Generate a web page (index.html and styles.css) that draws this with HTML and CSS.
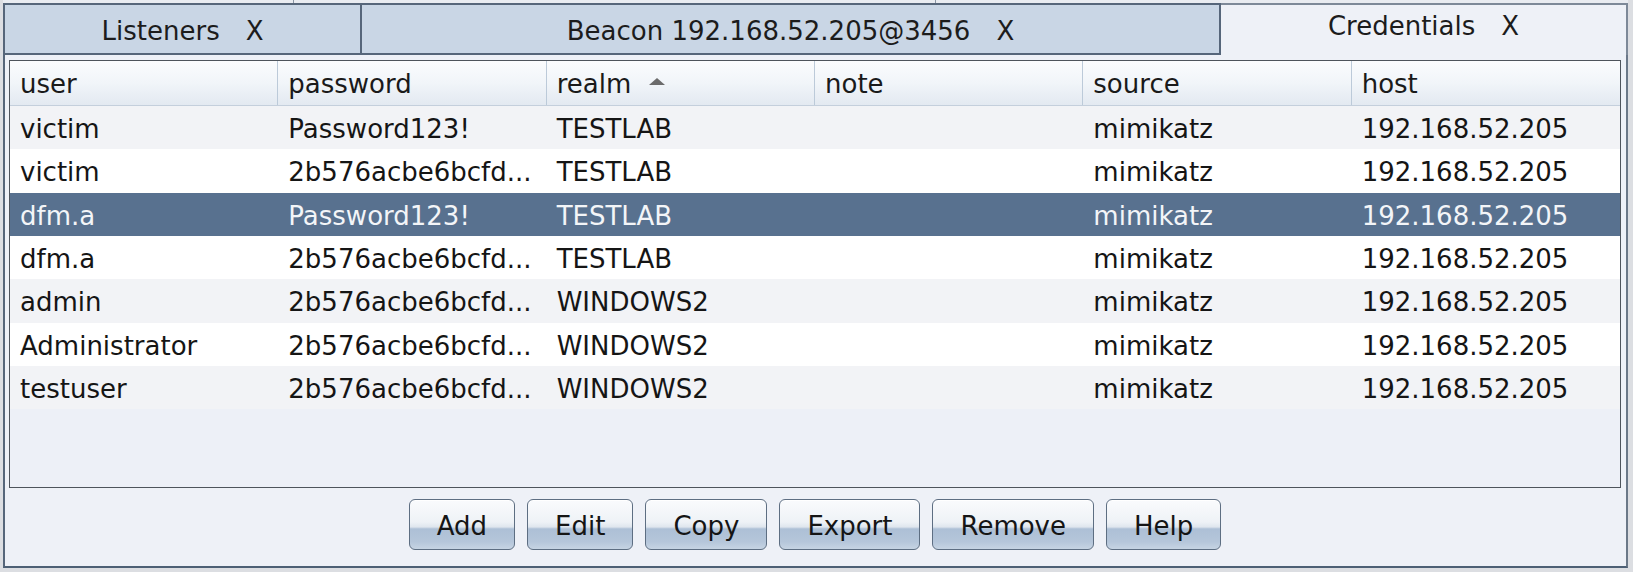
FILE: index.html
```html
<!DOCTYPE html>
<html>
<head>
<meta charset="utf-8">
<link rel="stylesheet" href="styles.css">
</head>
<body>
<div class="app">
  <div class="strip">
    <div class="seg seg1"></div>
    <div class="seg seg2"></div>
    <div class="seg seg3"></div>
  </div>
  <div class="tabs">
    <div class="tab tab-listeners"><span class="label">Listeners</span><span class="close">X</span></div>
    <div class="tab tab-beacon"><span class="label">Beacon 192.168.52.205@3456</span><span class="close">X</span></div>
    <div class="tab tab-active"><span class="label">Credentials</span><span class="close">X</span></div>
  </div>
  <div class="panel">
    <div class="table">
      <div class="thead">
        <div class="th">user</div>
        <div class="th">password</div>
        <div class="th">realm <span class="sort"></span></div>
        <div class="th">note</div>
        <div class="th">source</div>
        <div class="th th-last">host</div>
      </div>
      <div class="tbody">
        <div class="row odd"><div class="td">victim</div><div class="td">Password123!</div><div class="td">TESTLAB</div><div class="td"></div><div class="td">mimikatz</div><div class="td">192.168.52.205</div></div>
        <div class="row"><div class="td">victim</div><div class="td">2b576acbe6bcfd...</div><div class="td">TESTLAB</div><div class="td"></div><div class="td">mimikatz</div><div class="td">192.168.52.205</div></div>
        <div class="row selected"><div class="td">dfm.a</div><div class="td">Password123!</div><div class="td">TESTLAB</div><div class="td"></div><div class="td">mimikatz</div><div class="td">192.168.52.205</div></div>
        <div class="row"><div class="td">dfm.a</div><div class="td">2b576acbe6bcfd...</div><div class="td">TESTLAB</div><div class="td"></div><div class="td">mimikatz</div><div class="td">192.168.52.205</div></div>
        <div class="row odd"><div class="td">admin</div><div class="td">2b576acbe6bcfd...</div><div class="td">WINDOWS2</div><div class="td"></div><div class="td">mimikatz</div><div class="td">192.168.52.205</div></div>
        <div class="row"><div class="td">Administrator</div><div class="td">2b576acbe6bcfd...</div><div class="td">WINDOWS2</div><div class="td"></div><div class="td">mimikatz</div><div class="td">192.168.52.205</div></div>
        <div class="row odd"><div class="td">testuser</div><div class="td">2b576acbe6bcfd...</div><div class="td">WINDOWS2</div><div class="td"></div><div class="td">mimikatz</div><div class="td">192.168.52.205</div></div>
      </div>
    </div>
    <div class="buttons">
      <button class="btn">Add</button>
      <button class="btn">Edit</button>
      <button class="btn">Copy</button>
      <button class="btn">Export</button>
      <button class="btn">Remove</button>
      <button class="btn">Help</button>
    </div>
  </div>
</div>
</body>
</html>
```

FILE: styles.css
```css
* { box-sizing: border-box; }

html, body {
  margin: 0;
  padding: 0;
}

body {
  width: 1633px;
  height: 572px;
  overflow: hidden;
  background: #dcdee2;
  font-family: "DejaVu Sans", "Liberation Sans", sans-serif;
  font-size: 26px;
  color: #151515;
}

.app {
  margin-left: 3px;
  width: 1625px;
}

.strip {
  display: flex;
  height: 3px;
  background: #e9ecf1;
}

.seg { height: 3px; border-right: 1px solid #8a96a4; }
.seg1 { width: 291px; }
.seg2 { width: 642px; }
.seg3 { flex: 1; border-right: none; }

.tabs {
  display: flex;
  height: 52px;
}

.tab {
  display: flex;
  align-items: center;
  justify-content: center;
  background: #c9d6e5;
  border-top: 2px solid #56667a;
  border-bottom: 2px solid #56667a;
  border-right: 2px solid #56667a;
  padding-top: 4px;
  color: #1c1c1c;
}

.tab-listeners {
  width: 359px;
  border-left: 2px solid #56667a;
}

.tab-beacon {
  width: 859px;
}

.tab-active {
  flex: 1;
  background: #eef1f7;
  border-top: 2px solid #7d8998;
  border-right: 2px solid #7d8998;
  border-bottom: none;
  padding-top: 0;
  padding-bottom: 8px;
}

.close {
  margin-left: 26px;
}

.panel {
  height: 513px;
  background: #eef1f7;
  border-left: 2px solid #56667a;
  border-right: 2px solid #6b7888;
  border-bottom: 2px solid #4d6075;
  padding: 5px 5px 0 4px;
  display: flex;
  flex-direction: column;
}

.table {
  height: 428px;
  border: 1px solid #4e545c;
  background: #edf0f7;
  display: flex;
  flex-direction: column;
}

.thead {
  display: grid;
  grid-template-columns: repeat(6, 1fr);
  height: 45px;
  background: linear-gradient(to bottom, #fbfcfe 0%, #f1f5f9 50%, #e3e9f1 100%);
  border-bottom: 1px solid #c4cfdc;
}

.th {
  display: flex;
  align-items: center;
  padding-left: 10px;
  padding-top: 1px;
  border-right: 1px solid #bccad9;
  color: #1a1a1a;
}

.th-last { border-right: none; }

.sort {
  display: inline-block;
  width: 0;
  height: 0;
  margin-left: 18px;
  margin-top: -4px;
  border-left: 8px solid transparent;
  border-right: 8px solid transparent;
  border-bottom: 7px solid #6b6b6b;
}

.row {
  display: grid;
  grid-template-columns: repeat(6, 1fr);
  height: 43.33px;
  background: #ffffff;
}

.row.odd { background: #f2f3f6; }

.row.selected {
  background: #58718f;
  color: #f3f5f8;
}

.td {
  display: flex;
  align-items: center;
  padding-left: 10px;
  padding-top: 3px;
  white-space: nowrap;
  overflow: hidden;
}

.buttons {
  display: flex;
  justify-content: center;
  gap: 12px;
  padding-top: 11px;
}

.btn {
  height: 51px;
  padding: 2px 27px 0;
  font-family: "DejaVu Sans", "Liberation Sans", sans-serif;
  font-size: 26px;
  color: #151515;
  border: 1px solid #5d6e82;
  border-radius: 6px;
  background: linear-gradient(to bottom, #fafbfd 0%, #eef2f6 45%, #dfe6ee 55%, #adc0d6 59%, #b5c6da 85%, #c6d4e3 100%);
  box-shadow: inset 0 1px 0 #ffffff;
}
```
